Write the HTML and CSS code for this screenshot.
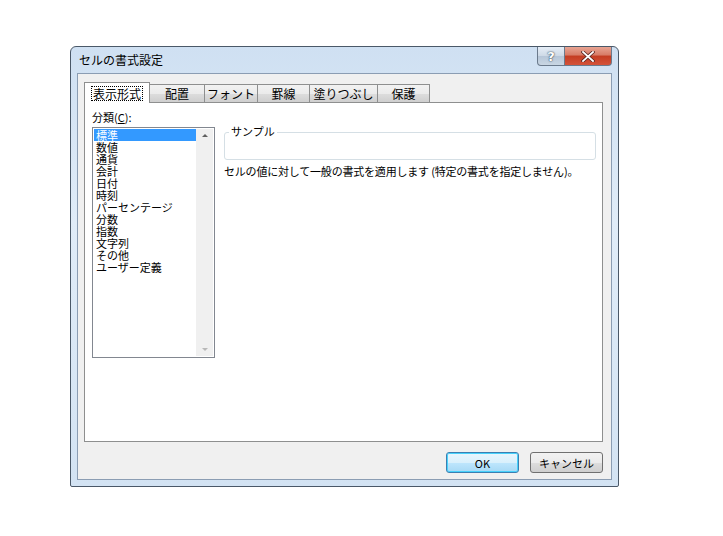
FILE: index.html
```html
<!DOCTYPE html>
<html lang="ja">
<head>
    <meta charset="UTF-8">
    <title>セルの書式設定</title>
    <link rel="stylesheet" href="styles.css">
</head>
<body>
    <div class="window">
        <div class="titlebar">
            <span class="title">セルの書式設定</span>
            <div class="caption-buttons">
                <div class="cap-btn help">?</div>
                <div class="cap-btn close">
                    <svg width="14" height="11" viewBox="0 0 14 11">
                        <path d="M2 1 L12 10 M12 1 L2 10" stroke="#5a2420" stroke-width="3.4" stroke-linecap="square"/>
                        <path d="M2 1 L12 10 M12 1 L2 10" stroke="#ffffff" stroke-width="1.8" stroke-linecap="square"/>
                    </svg>
                </div>
            </div>
        </div>
        <div class="client">
            <div class="tabs">
                <div class="tab active"><span class="focus">表示形式</span></div>
                <div class="tab w55">配置</div>
                <div class="tab w53">フォント</div>
                <div class="tab w52">罫線</div>
                <div class="tab w68">塗りつぶし</div>
                <div class="tab w52">保護</div>
            </div>
            <div class="panel">
                <div class="left-col">
                    <div class="label">分類(<u>C</u>):</div>
                    <div class="listbox">
                        <ul class="items">
                            <li class="selected">標準</li>
                            <li>数値</li>
                            <li>通貨</li>
                            <li>会計</li>
                            <li>日付</li>
                            <li>時刻</li>
                            <li>パーセンテージ</li>
                            <li>分数</li>
                            <li>指数</li>
                            <li>文字列</li>
                            <li>その他</li>
                            <li>ユーザー定義</li>
                        </ul>
                        <div class="scrollbar">
                            <div class="arrow up"></div>
                            <div class="arrow down"></div>
                        </div>
                    </div>
                </div>
                <div class="right-col">
                    <div class="group">
                        <span class="group-label">サンプル</span>
                    </div>
                    <div class="desc">セルの値に対して一般の書式を適用します (特定の書式を指定しません)。</div>
                </div>
            </div>
            <div class="buttons">
                <button class="btn default">OK</button>
                <button class="btn">キャンセル</button>
            </div>
        </div>
    </div>
</body>
</html>
```

FILE: styles.css
```css
body {
    margin: 0;
    background-color: #ffffff;
    font-family: "Noto Sans CJK JP", "DejaVu Sans", sans-serif;
    font-size: 12px;
    color: #000000;
}

.window {
    box-sizing: border-box;
    width: 549px;
    height: 441px;
    margin: 46px 0 0 70px;
    border: 1px solid #4a5868;
    border-radius: 6px 6px 2px 2px;
    background: linear-gradient(to bottom, #cfe0f2 0%, #e0ecf8 40%, #d3e3f3 100%);
    padding: 0 6px 6px 6px;
    display: flex;
    flex-direction: column;
}

.titlebar {
    height: 26px;
    display: flex;
    justify-content: space-between;
    align-items: flex-start;
}

.title {
    margin: 6px 0 0 2px;
    font-size: 12px;
    line-height: 14px;
}

.caption-buttons {
    display: flex;
}

.cap-btn {
    height: 18px;
    display: flex;
    justify-content: center;
    align-items: center;
    border: 1px solid #6b7a8c;
    border-top: none;
}

.help {
    width: 26px;
    border-radius: 0 0 0 4px;
    background: linear-gradient(to bottom, #e6eef7 0%, #cdd9e6 50%, #b6c6d8 51%, #c9d6e3 100%);
    color: #ffffff;
    font-family: "DejaVu Sans", sans-serif;
    font-weight: bold;
    font-size: 13px;
    text-shadow: 0 0 2px #334455, 0 0 1px #334455;
}

.close {
    width: 46px;
    border-left: none;
    border-radius: 0 0 4px 0;
    background: linear-gradient(to bottom, #e8a493 0%, #d77b66 45%, #c43c22 50%, #d4533a 100%);
}

.client {
    flex: 1;
    border: 1px solid #8b9db3;
    background-color: #f0f0f0;
    padding: 9px 8px 0 6px;
    display: flex;
    flex-direction: column;
}

.tabs {
    display: flex;
    height: 19px;
    align-items: flex-end;
    position: relative;
    z-index: 1;
}

.tab {
    box-sizing: border-box;
    height: 18px;
    border: 1px solid #8e8f8f;
    border-bottom: none;
    border-left: none;
    background: linear-gradient(to bottom, #f2f2f2 0%, #ebebeb 50%, #dddddd 51%, #cfcfcf 100%);
    display: flex;
    justify-content: center;
    align-items: center;
    line-height: 14px;
}

.w55 { width: 55px; }
.w53 { width: 53px; }
.w52 { width: 52px; }
.w68 { width: 68px; }

.tab.active {
    width: 66px;
    height: 21px;
    margin-bottom: -1px;
    border-left: 1px solid #8e8f8f;
    background: #ffffff;
}

.focus {
    border: 1px dotted #000000;
    padding: 0 1px;
    line-height: 13px;
}

.panel {
    box-sizing: border-box;
    width: 519px;
    height: 340px;
    border: 1px solid #8e8f8f;
    background-color: #ffffff;
    display: flex;
    padding: 7px 0 0 7px;
    gap: 9px;
}

.left-col {
    display: flex;
    flex-direction: column;
}

.label {
    line-height: 14px;
    height: 17px;
    font-size: 11px;
}

.listbox {
    box-sizing: border-box;
    width: 123px;
    height: 231px;
    border: 1px solid #828790;
    display: flex;
    padding: 1px;
}

.items {
    list-style: none;
    margin: 0;
    padding: 0;
    flex: 1;
}

.items li {
    height: 12px;
    line-height: 12px;
    font-size: 11px;
    padding-left: 2px;
    white-space: nowrap;
}

.items li.selected {
    background-color: #3399ff;
    color: #ffffff;
}

.scrollbar {
    width: 17px;
    background-color: #f0f0f0;
    display: flex;
    flex-direction: column;
    justify-content: space-between;
    align-items: center;
    padding: 5px 0;
    box-sizing: border-box;
}

.arrow {
    width: 0;
    height: 0;
    border-left: 3px solid transparent;
    border-right: 3px solid transparent;
}

.arrow.up {
    border-bottom: 3px solid #606060;
}

.arrow.down {
    border-top: 3px solid #b8b8b8;
}

.right-col {
    display: flex;
    flex-direction: column;
    padding-top: 17px;
}

.group {
    box-sizing: border-box;
    width: 372px;
    height: 28px;
    margin-top: 5px;
    border: 1px solid #d5dfe5;
    border-radius: 3px;
    position: relative;
}

.group-label {
    position: absolute;
    left: 4px;
    top: -9px;
    background-color: #ffffff;
    padding: 0 2px;
    line-height: 14px;
    font-size: 11px;
}

.desc {
    margin-top: 4px;
    line-height: 14px;
    font-size: 11px;
    letter-spacing: -0.2px;
    white-space: nowrap;
}

.buttons {
    display: flex;
    justify-content: flex-end;
    gap: 11px;
    margin-top: 10px;
}

.btn {
    width: 73px;
    height: 21px;
    border: 1px solid #707070;
    border-radius: 3px;
    background: linear-gradient(to bottom, #f2f2f2 0%, #ebebeb 50%, #dddddd 51%, #cfcfcf 100%);
    font-family: "Noto Sans CJK JP", "DejaVu Sans", sans-serif;
    font-size: 11px;
    padding: 0;
    color: #000000;
}

.btn.default {
    border-color: #3c7fb1;
    box-shadow: inset 0 0 0 1px #48d1fb;
    background: linear-gradient(to bottom, #eaf6fd 0%, #d9f0fc 50%, #bee6fd 51%, #a7d9f5 100%);
}
```
